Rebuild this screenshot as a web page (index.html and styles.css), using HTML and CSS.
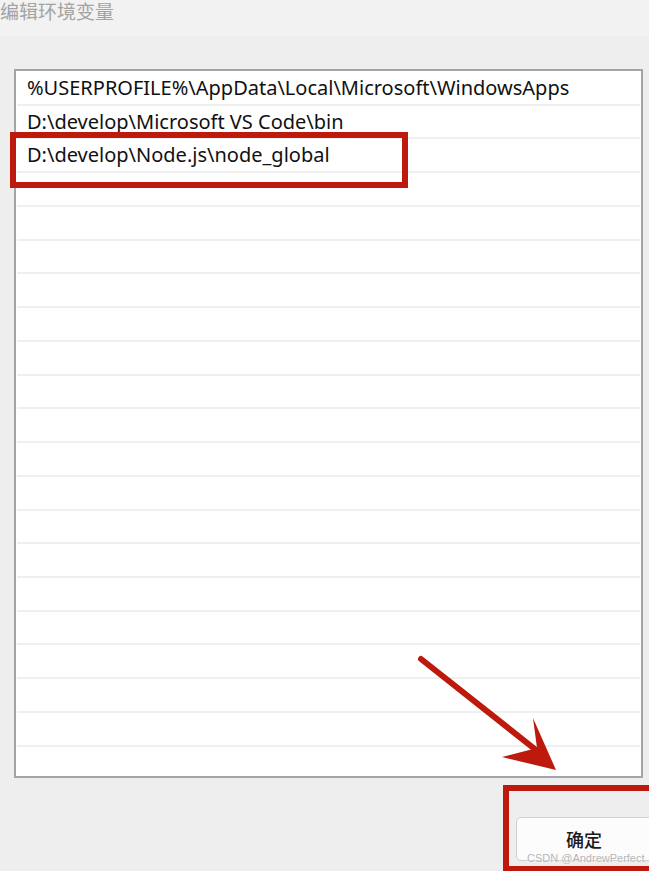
FILE: index.html
```html
<!DOCTYPE html>
<html lang="zh">
<head>
<meta charset="utf-8">
<title>编辑环境变量</title>
<link rel="stylesheet" href="styles.css">
</head>
<body>
<div class="window">
  <div class="titlebar"><span class="title">编辑环境变量</span></div>
  <div class="content">
    <div class="listbox">
      <div class="row">%USERPROFILE%\AppData\Local\Microsoft\WindowsApps</div>
      <div class="row">D:\develop\Microsoft VS Code\bin</div>
      <div class="row">D:\develop\Node.js\node_global</div>
      <div class="row"></div>
      <div class="row"></div>
      <div class="row"></div>
      <div class="row"></div>
      <div class="row"></div>
      <div class="row"></div>
      <div class="row"></div>
      <div class="row"></div>
      <div class="row"></div>
      <div class="row"></div>
      <div class="row"></div>
      <div class="row"></div>
      <div class="row"></div>
      <div class="row"></div>
      <div class="row"></div>
      <div class="row"></div>
      <div class="row"></div>
      <div class="row last"></div>
    </div>
    <div class="footer">
      <button class="btn">确定</button>
    </div>
  </div>

  <div class="mark mark-row"></div>
  <div class="mark mark-btn"></div>
  <svg class="arrow" width="649" height="871" viewBox="0 0 649 871">
    <line x1="421" y1="659" x2="536" y2="750" stroke="#bd190c" stroke-width="6" stroke-linecap="round"/>
    <polygon points="556,770 533,718 537,748 502,757" fill="#bd190c"/>
  </svg>
  <div class="watermark">CSDN @AndrewPerfect</div>
</div>
</body>
</html>
```

FILE: styles.css
```css
html, body {
  margin: 0;
  padding: 0;
}
body {
  width: 649px;
  height: 871px;
  overflow: hidden;
  background: #eeeeee;
  font-family: "Noto Sans", "Noto Sans CJK SC", sans-serif;
}
.window {
  position: relative;
  width: 649px;
  height: 871px;
  overflow: hidden;
  display: flex;
  flex-direction: column;
}
.titlebar {
  height: 36px;
  background: #f2f2f2;
  display: flex;
  align-items: flex-start;
}
.title {
  font-family: "Noto Sans CJK SC", sans-serif;
  font-size: 19px;
  line-height: 20px;
  color: #a3a3a3;
  margin-top: 1px;
}
.content {
  flex: 1;
  display: flex;
  flex-direction: column;
}
.listbox {
  margin: 33px 0 0 14px;
  width: 629px;
  height: 709px;
  box-sizing: border-box;
  border: 2px solid #a1a5aa;
  background: #ffffff;
  padding: 1px 1px 0 1px;
  overflow: hidden;
}
.row {
  height: 33.74px;
  box-sizing: border-box;
  border-bottom: 2px solid #efefef;
  padding-left: 10px;
  font-size: 20px;
  line-height: 32px;
  color: #111111;
  white-space: nowrap;
}
.row.last {
  border-bottom: none;
}
.footer {
  display: flex;
  padding-top: 39px;
}
.btn {
  margin-left: 516px;
  width: 140px;
  height: 44px;
  flex: none;
  border: 1px solid #cfcfcf;
  border-radius: 5px;
  background: #fcfcfc;
  font-family: "Noto Sans CJK SC", sans-serif;
  font-size: 18px;
  font-weight: 500;
  color: #1b1b1b;
  padding: 0;
  text-align: left;
  text-indent: 49px;
}
.mark {
  position: absolute;
  border: 6px solid #bd190c;
  box-sizing: border-box;
}
.mark-row {
  left: 10px;
  top: 132px;
  width: 398px;
  height: 56px;
}
.mark-btn {
  left: 503px;
  top: 785px;
  width: 160px;
  height: 86px;
  border-bottom-width: 5px;
}
.arrow {
  position: absolute;
  left: 0;
  top: 0;
}
.watermark {
  position: absolute;
  left: 527px;
  top: 852px;
  white-space: nowrap;
  font-family: "Liberation Sans", sans-serif;
  font-size: 11px;
  line-height: 13px;
  color: #b5b5b5;
  text-shadow: 0 0 2px #ffffff, 0 0 1px #ffffff;
}
```
